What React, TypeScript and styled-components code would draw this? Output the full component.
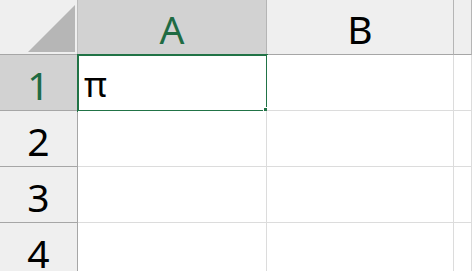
import React from "react";
import styled, { createGlobalStyle } from "styled-components";

const Global = createGlobalStyle`
  html, body { margin: 0; padding: 0; background: #ffffff; overflow: hidden; }
  body { font-family: "Noto Sans", "Open Sans", sans-serif; }
`;

const Sheet = styled.div`
  display: grid;
  grid-template-columns: 78px 189px 187px 1fr;
  grid-template-rows: 55px 56px 56px 56px 56px;
  width: 472px;
  height: 271px;
  overflow: hidden;
`;

const Corner = styled.div`
  box-sizing: border-box;
  background: #efefef;
  border-right: 1px solid #bdbdbd;
  border-bottom: 1px solid #a6a6a6;
  display: flex;
  align-items: flex-end;
  justify-content: flex-end;
  padding: 0 2px 2px 0;
`;

const ColHeader = styled.div<{ $sel?: boolean }>`
  box-sizing: border-box;
  background: ${(p) => (p.$sel ? "#d2d2d2" : "#efefef")};
  color: ${(p) => (p.$sel ? "#1f6b43" : "#000000")};
  border-right: 1px solid #b5b5b5;
  border-bottom: 1px solid #a6a6a6;
  display: flex;
  align-items: center;
  justify-content: center;
  font-size: 39px;
  line-height: 1;
  padding-top: 3px;
`;

const RowHeader = styled.div<{ $sel?: boolean }>`
  box-sizing: border-box;
  background: ${(p) => (p.$sel ? "#d2d2d2" : "#efefef")};
  color: ${(p) => (p.$sel ? "#1f6b43" : "#000000")};
  border-right: 1px solid #a6a6a6;
  border-bottom: 1px solid #a6a6a6;
  display: flex;
  align-items: center;
  justify-content: center;
  font-size: 39px;
  line-height: 1;
  padding-top: 3px;
`;

const Cell = styled.div`
  box-sizing: border-box;
  background: #ffffff;
  border-right: 1px solid #dcdcdc;
  border-bottom: 1px solid #dcdcdc;
  display: flex;
  align-items: center;
  padding-left: 6px;
  padding-top: 2px;
  font-size: 35px;
  line-height: 1;
  color: #000;
  position: relative;
`;

const Selection = styled.div`
  position: absolute;
  left: -1px;
  top: -1px;
  right: -2px;
  bottom: -2px;
  border: 2px solid #217346;
  pointer-events: none;
`;

const Handle = styled.div`
  position: absolute;
  right: -4px;
  bottom: -4px;
  width: 5px;
  height: 5px;
  background: #217346;
  border: 1px solid #ffffff;
`;

const Triangle = () => (
  <svg width="47" height="47" viewBox="0 0 47 47" style={{ display: "block" }}>
    <polygon points="0,47 47,0 47,47" fill="#b6b6b6" />
  </svg>
);

export default function App() {
  const cols = ["A", "B", ""];
  const rows = [1, 2, 3, 4];
  return (
    <>
      <Global />
      <Sheet>
        <Corner>
          <Triangle />
        </Corner>
        {cols.map((c, i) => (
          <ColHeader key={i} $sel={c === "A"}>
            {c}
          </ColHeader>
        ))}
        {rows.map((r) => (
          <React.Fragment key={r}>
            <RowHeader $sel={r === 1}>{r}</RowHeader>
            {cols.map((c, i) => (
              <Cell key={i}>
                {r === 1 && c === "A" ? (
                  <>
                    π
                    <Selection>
                      <Handle />
                    </Selection>
                  </>
                ) : null}
              </Cell>
            ))}
          </React.Fragment>
        ))}
      </Sheet>
    </>
  );
}
